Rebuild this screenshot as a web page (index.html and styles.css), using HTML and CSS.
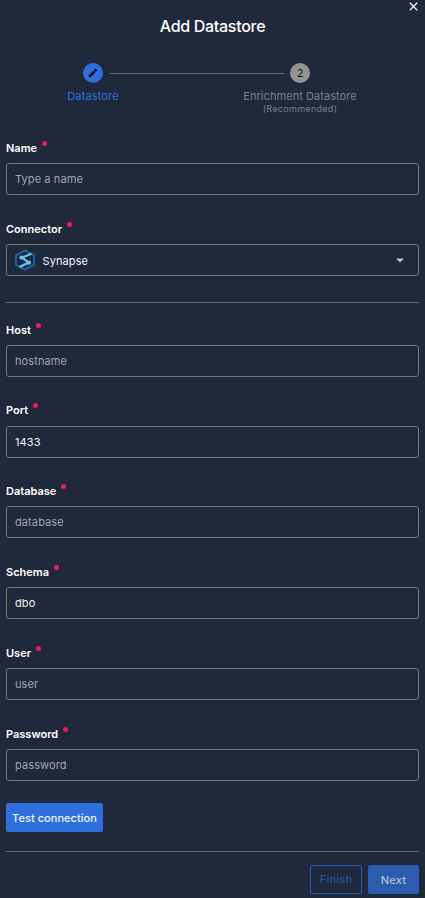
FILE: index.html
```
<!DOCTYPE html>
<html lang="en">
<head>
<meta charset="utf-8">
<title>Add Datastore</title>
<link rel="stylesheet" href="styles.css">
</head>
<body>
<main class="dialog">
  <button class="close" aria-label="Close"><svg width="9" height="9" viewBox="0 0 9 9"><path d="M.8.8l7.4 7.4M8.2.8L.8 8.2"/></svg></button>
  <h1>Add Datastore</h1>
  <div class="steps">
    <div class="step active">
      <span class="dot"><svg width="12" height="12" viewBox="0 0 12 12"><path d="M1.700 8.400v1.800h1.800l4.700-4.700-1.800-1.800zM7 3.100l1.800 1.800 1.300-1.300q.3-.3 0-.6L8.900 1.800q-.3-.3-.6 0z"/></svg></span>
      <span class="step-name">Datastore</span>
    </div>
    <div class="track"></div>
    <div class="step">
      <span class="dot">2</span>
      <span class="step-name">Enrichment Datastore</span>
      <span class="hint">(Recommended)</span>
    </div>
  </div>
  <form>
    <div class="field"><label>Name<i></i></label><input type="text" placeholder="Type a name"></div>
    <div class="field"><label>Connector<i></i></label>
      <div class="select">
        <svg class="logo" width="20" height="22" viewBox="0 0 20 22"><path class="hex" d="M10 1.2l9 5v9.6l-9 5-9-5V6.200z"/><path class="mark" d="M16.500 4.800L7 8.600l6.700 5-9.200 4.400"/><circle cx="6.500" cy="8.600" r="2.100"/><circle cx="14" cy="13.700" r="2.100"/></svg>
        <span>Synapse</span>
        <svg class="caret" width="8" height="5" viewBox="0 0 8 5"><path d="M0 .5h8L4 4.500z"/></svg>
      </div>
    </div>
    <hr>
    <div class="field"><label>Host<i></i></label><input type="text" placeholder="hostname"></div>
    <div class="field"><label>Port<i></i></label><input class="port" type="text" value="1433"></div>
    <div class="field"><label>Database<i></i></label><input type="text" placeholder="database"></div>
    <div class="field"><label>Schema<i></i></label><input type="text" value="dbo"></div>
    <div class="field"><label>User<i></i></label><input type="text" placeholder="user"></div>
    <div class="field"><label>Password<i></i></label><input type="password" placeholder="password"></div>
    <button type="button" class="btn test">Test connection</button>
  </form>
  <footer>
    <button class="btn finish">Finish</button>
    <button class="btn next">Next</button>
  </footer>
</main>
</body>
</html>
```
FILE: styles.css
```
* { box-sizing: border-box; }
body {
  margin: 0;
  background: #20283c;
  color: #f3f4f6;
  font: 11px/16px Inter, "Liberation Sans", sans-serif;
  letter-spacing: .06px;
}
.dialog { position: relative; height: 898px; padding: 16px 6px 0; overflow: hidden; }
.close { position: absolute; top: 2px; right: 7px; width: 9px; height: 9px; padding: 0; border: 0; background: none; }
.close svg { display: block; }
.close path { stroke: #f3f4f6; stroke-width: 1.3; fill: none; }
h1 { margin: 0; font-size: 16px; line-height: 20px; font-weight: 500; letter-spacing: -.3px; text-align: center; color: #fff; }
.steps { display: flex; align-items: flex-start; height: 104px; padding: 27px 0 0 27px; }
.step { display: flex; flex-direction: column; align-items: center; width: 120px; color: #7e7f84; }
.step .dot { display: grid; place-items: center; width: 20px; height: 20px; border-radius: 50%; background: #939393; color: #15171c; letter-spacing: 0; }
.step.active .dot { background: #2f6fdb; }
.dot path { fill: #000; }
.step-name { margin-top: 5px; white-space: nowrap; }
.step.active .step-name { color: #2f6fdb; letter-spacing: .15px; }
.hint { font-size: 9px; line-height: 10px; letter-spacing: .3px; }
.track { width: 174px; height: 1px; margin: 10px -43.500px 0; background: #626775; }
.field { display: flex; flex-direction: column; height: 80.8px; }
label { display: flex; height: 23px; font-weight: 600; letter-spacing: 0; color: #fff; }
label i { width: 5px; height: 5px; margin: 1px 0 0 5px; border-radius: 50%; background: #e91e55; }
input, .select {
  width: 100%; height: 32px; padding: 0 8px;
  border: 1px solid #777774; border-radius: 3px;
  background: transparent; color: #f3f4f6; font: inherit; letter-spacing: .1px; outline: 0;
}
input.port { margin-top: 1px; padding-bottom: 1px; }
input::placeholder { color: #a0a4ad; opacity: 1; }
.select { display: flex; align-items: center; }
.select span { padding-top: 2px; }
.logo { margin-right: 7.500px; }
.logo path { fill: none; }
.logo .hex { stroke: #1b68ad; stroke-width: 1.8; }
.logo .mark { stroke: #63c8ea; stroke-width: 2.2; }
.logo circle { fill: #63c8ea; }
.caret { margin: 1px 6px 0 auto; }
.caret path { fill: #c5c8d0; }
hr { height: 1px; margin: 0 0 19px; border: 0; background: #626775; }
.btn { height: 29px; padding: 0; border: 0; border-radius: 2px; font: 500 11px/16px Inter, sans-serif; letter-spacing: .25px; color: #f3f4f6; background: #2f6fdb; }
.test { display: block; width: 97px; margin-top: -3.500px; padding-top: 1px; letter-spacing: .04px; }
footer { display: flex; justify-content: flex-end; gap: 6px; margin-top: 19px; padding-top: 13px; border-top: 1px solid #626775; }
.finish { width: 52px; border: 1px solid #2959aa; background: none; color: #29539b; }
.next { width: 51px; padding-top: 1px; background: #2b5cae; color: #b7bdca; }
```
